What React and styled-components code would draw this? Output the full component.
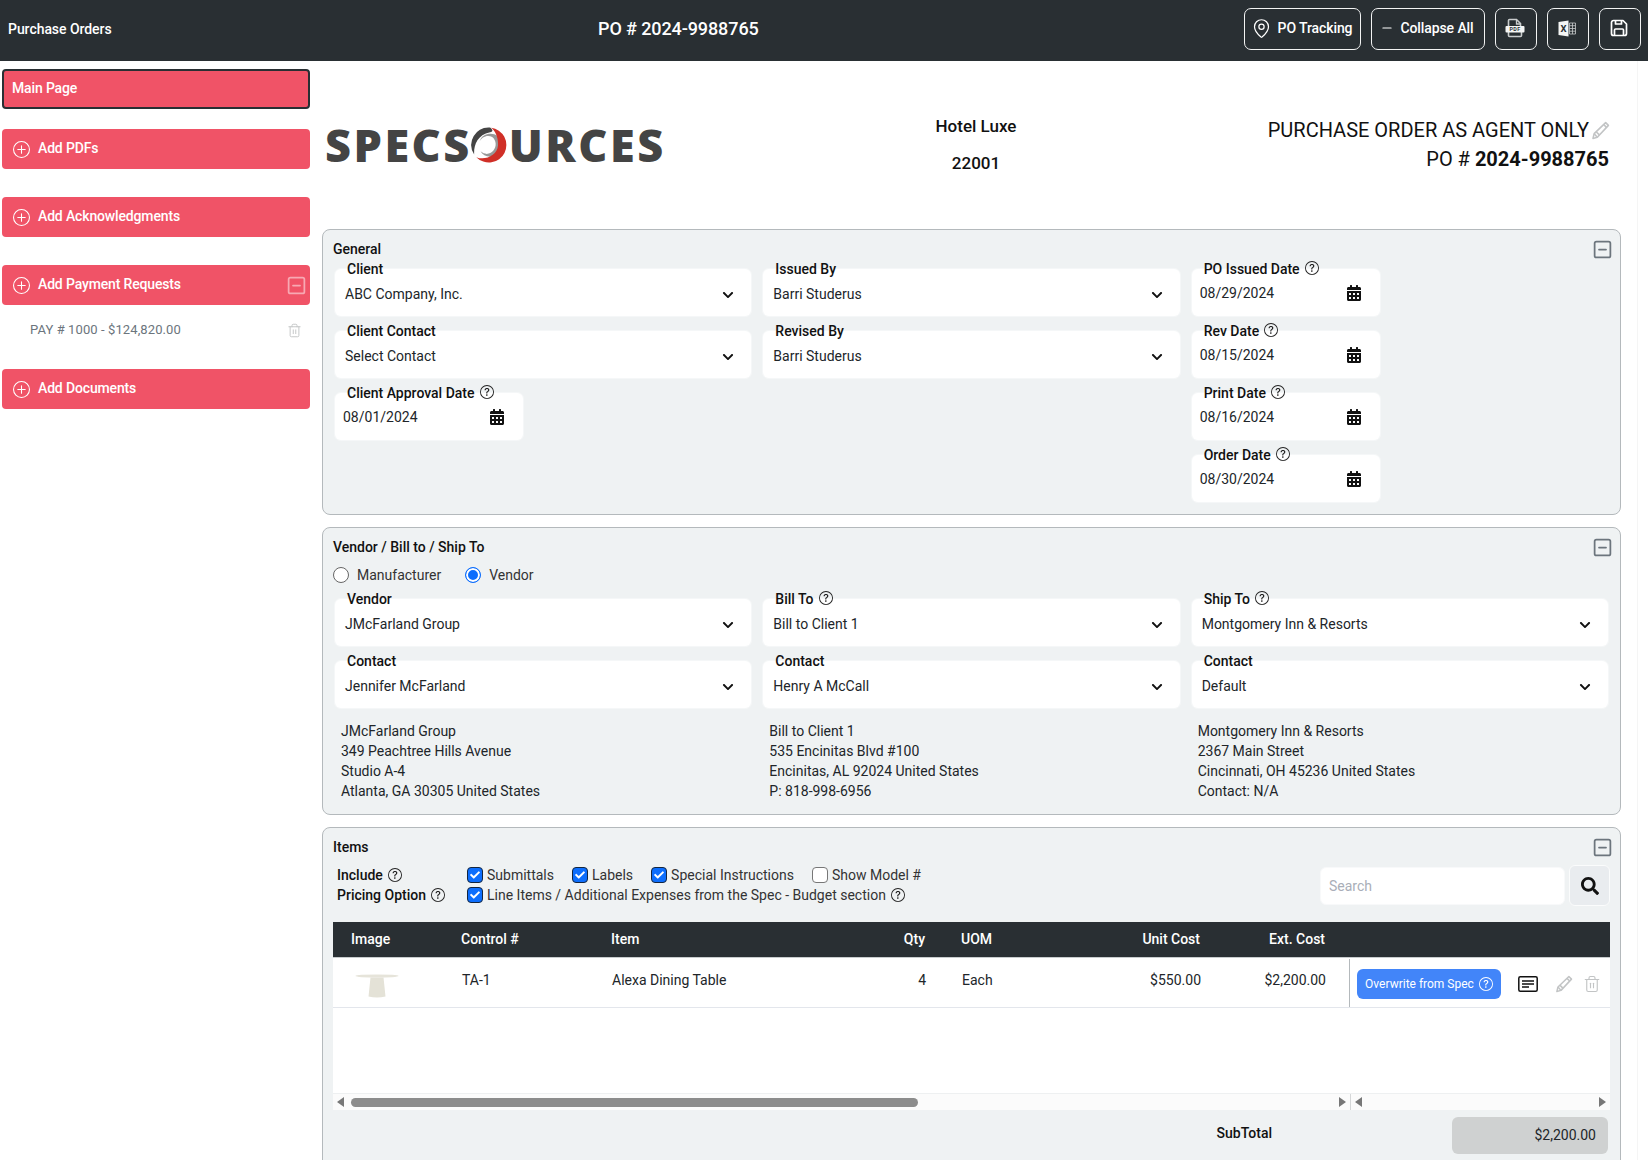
import React from "react";
import styled, { createGlobalStyle } from "styled-components";
import { MapPin, Minus, Trash2, SquareMinus } from "lucide-react";
import { BsPlusCircle, BsQuestionCircle } from "react-icons/bs";
import { FaCalendarAlt, FaChevronDown, FaSearch, FaCheck } from "react-icons/fa";

const GlobalStyle = createGlobalStyle`
  html, body {
    margin: 0;
    padding: 0;
    background: #fff;
  }
  * {
    box-sizing: border-box;
  }
  body {
    font-family: Roboto, "Liberation Sans", sans-serif;
    font-size: 14px;
    color: #212529;
  }
`;

const Page = styled.div`
  width: 1648px;
  height: 1160px;
  overflow: hidden;
  display: flex;
  flex-direction: column;
`;

const TopBar = styled.header`
  flex: none;
  height: 61px;
  background: #292f33;
  color: #fff;
  display: grid;
  grid-template-columns: 590px auto 1fr;
  align-items: center;
  padding: 0 7px 3px 8px;
`;

const TopLabel = styled.div`
  font-weight: 500;
  font-size: 14px;
  letter-spacing: -0.05px;
`;

const TopTitle = styled.div`
  font-size: 18px;
  font-weight: 500;
  letter-spacing: -0.1px;
  margin-top: -2px;
`;

const TopActions = styled.div`
  justify-self: end;
  display: flex;
  gap: 10px;
`;

const TopButton = styled.button`
  height: 42px;
  width: ${(p) => (p.$wide ? `${p.$wide}px` : "42px")};
  background: transparent;
  color: #fff;
  border: 1px solid #f2f3f3;
  border-radius: 7px;
  display: flex;
  align-items: center;
  justify-content: center;
  gap: 6px;
  font: 500 14px Roboto, sans-serif;
  letter-spacing: -0.1px;
  padding: 0 2px 2px 0;
`;

const Body = styled.div`
  flex: 1;
  display: flex;
  min-height: 0;
`;

const Sidebar = styled.aside`
  flex: none;
  width: 322px;
  padding: 8px 12px 0 2px;
`;

const SideList = styled.div`
  display: flex;
  flex-direction: column;
  gap: 28px;
`;

const SideButton = styled.div`
  height: 40px;
  background: #f05367;
  color: #fff;
  border-radius: 4px;
  display: flex;
  align-items: center;
  gap: 8px;
  padding: 0 6px 2px 11px;
  font-weight: 500;
  font-size: 14px;
  letter-spacing: -0.15px;

  svg {
    flex: none;
    margin-top: 2px;
  }
`;

const MainButton = styled(SideButton)`
  border: 2px solid #292f33;
  padding-left: 8px;
  margin-bottom: 20px;
`;

const SideLabel = styled.span`
  flex: 1;
`;

const PayRow = styled.div`
  height: 36px;
  padding: 15px 8px 0 28px;
  display: flex;
  justify-content: space-between;
  color: #6c757d;
  line-height: 20px;
  font-size: 13px;
  letter-spacing: 0.1px;

  svg {
    margin-top: 3px;
  }
`;

const Main = styled.main`
  flex: 1;
  min-width: 0;
  padding-right: 16px;
`;

const PageHead = styled.div`
  height: 168px;
  display: grid;
  grid-template-columns: 567px 168px 1fr;
  align-items: center;
  padding: 0 12px 0 3px;
`;

const Logo = styled.div`
  display: flex;
  align-items: center;
  color: #444;
  font-family: "Open Sans", sans-serif;
  font-weight: 800;
  font-size: 45px;
  letter-spacing: 2.5px;
  line-height: 46px;

  svg {
    margin: 0 2px 0 -1px;
  }
`;

const Hotel = styled.div`
  text-align: center;
  font-size: 17px;
  font-weight: 500;
  line-height: 37px;
  color: #111;
`;

const OrderInfo = styled.div`
  text-align: right;
  font-size: 20px;
  line-height: 29px;
  color: #111;

  b {
    font-weight: 700;
  }
`;

const AgentLine = styled.div`
  display: flex;
  justify-content: flex-end;
  align-items: center;
  gap: 2px;
  margin-right: -1px;
`;

const Panels = styled.div`
  display: flex;
  flex-direction: column;
  gap: 12px;
`;

const Panel = styled.section`
  background: #eff2f3;
  border: 1px solid #b4b9bc;
  border-radius: 8px;
  padding: 9px 10px ${(p) => p.$pb || 12}px;
`;

const PanelHead = styled.div`
  height: 20px;
  display: flex;
  justify-content: space-between;
  align-items: center;
  font-weight: 500;
  color: #111;
  line-height: 20px;
`;

const FieldGrid = styled.div`
  display: grid;
  grid-template-columns: repeat(3, 1fr);
  gap: 12px;
  padding: 0 2px;
  margin-top: ${(p) => p.$mt || 0}px;
`;

const FieldColumn = styled.div`
  display: flex;
  flex-direction: column;
  gap: 15px;
`;

const FieldBox = styled.div`
  position: relative;
  height: 47px;
  width: ${(p) => (p.$date ? "188px" : "auto")};
  background: #fff;
  border-radius: 6px;
  box-shadow: 0 0 0 1px #f5f7f8;
  display: flex;
  align-items: center;
  justify-content: space-between;
  padding: ${(p) => (p.$date ? "0 18px 0 8px" : "3px 17px 0 10px")};
  font-size: 14px;

  > svg:last-child {
    margin-top: ${(p) => (p.$date ? 0 : 2)}px;
  }
`;

const FieldLabel = styled.label`
  position: absolute;
  left: 8px;
  top: -10px;
  height: 20px;
  padding: 0 4px;
  display: inline-flex;
  align-items: center;
  gap: 5px;
  font-weight: 500;
  color: #111;
  background: linear-gradient(transparent 10px, #fff 10px);
  white-space: nowrap;

  svg {
    margin-top: -2px;
  }
`;

const RadioRow = styled.div`
  height: 20px;
  margin: 8px 0 14px;
  display: flex;
  align-items: center;
`;

const RadioLabel = styled.label`
  display: flex;
  align-items: center;
  gap: 8px;
  margin-right: 24px;
  color: #333;
`;

const Radio = styled.span`
  width: 16px;
  height: 16px;
  border-radius: 50%;
  background: ${(p) => (p.$on ? "#0d6efd" : "#fff")};
  border: 1px solid ${(p) => (p.$on ? "#0d6efd" : "#666")};
  box-shadow: ${(p) => (p.$on ? "inset 0 0 0 2px #fff" : "none")};
`;

const AddressGrid = styled(FieldGrid)`
  height: 79px;
`;

const Address = styled.div`
  padding-left: 6px;
  line-height: 20px;
  color: #212529;
`;

const Toolbar = styled.div`
  height: 41px;
  margin: 8px 0 16px;
  display: flex;
  justify-content: space-between;
  align-items: center;
`;

const OptionGrid = styled.div`
  display: grid;
  grid-template-columns: 130px 1fr;
  grid-auto-rows: 20px;
  padding-left: 4px;
  margin-bottom: 2px;
  align-items: center;
`;

const OptionName = styled.div`
  display: flex;
  align-items: center;
  gap: 5px;
  font-weight: 500;
  color: #111;
`;

const OptionList = styled.div`
  display: flex;
  align-items: center;
  gap: 18px;
`;

const Check = styled.label`
  display: flex;
  align-items: center;
  gap: 4px;
  color: #333;

  > svg {
    margin-left: 1px;
  }
`;

const CheckBox = styled.span`
  width: 16px;
  height: 16px;
  border-radius: 4px;
  display: inline-flex;
  align-items: center;
  justify-content: center;
  color: #fff;
  background: ${(p) => (p.$on ? "#0d6efd" : "#fff")};
  border: 1px solid ${(p) => (p.$on ? "#14263f" : "#777")};
`;

const SearchBar = styled.div`
  display: flex;
  align-items: center;
  gap: 4px;
`;

const SearchInput = styled.input`
  width: 245px;
  height: 38px;
  border: 1px solid #f8f9fa;
  border-radius: 6px;
  background: #fff;
  padding: 0 8px;
  font: 14px Roboto, sans-serif;
  outline: none;

  &::placeholder {
    color: #a9aeb8;
  }
`;

const SearchButton = styled.button`
  width: 41px;
  height: 41px;
  border: 1px solid #fbfcfc;
  border-radius: 6px;
  background: #e9ecef;
  color: #111;
  display: flex;
  align-items: center;
  justify-content: center;
  padding: 0;
`;

const columns = "110px 150px 251px 80px 119px 156px 142px 1fr";

const TableHead = styled.div`
  height: 36px;
  background: #292f33;
  border-bottom: 1px solid #c8ccce;
  color: #fff;
  font-weight: 500;
  display: grid;
  grid-template-columns: ${columns};
  align-items: center;
  padding-left: 10px;
  line-height: 35px;
`;

const TableRow = styled.div`
  height: 50px;
  background: #fff;
  border-bottom: 1px solid #e3e6ec;
  display: grid;
  grid-template-columns: ${columns};
  padding-left: 11px;
  line-height: 20px;
`;

const Cell = styled.div`
  padding: ${(p) => (p.$top ? "12px" : "0")} ${(p) => p.$pr ?? (p.$right ? 9 : 8)}px 0 ${(p) => p.$pl ?? 8}px;
  text-align: ${(p) => (p.$right ? "right" : "left")};
`;

const ActionCell = styled.div`
  margin: 1px 0 0 -3px;
  border-left: 1px solid #b4b9bc;
  display: flex;
  align-items: center;
  padding: 2px 0 0 7px;
`;

const OverwriteButton = styled.button`
  width: 144px;
  height: 30px;
  background: #4285f9;
  color: #fff;
  border: 0;
  border-radius: 6px;
  display: flex;
  align-items: center;
  justify-content: center;
  gap: 5px;
  font: 12px Roboto, sans-serif;
  padding: 0;
  margin-right: 17px;
`;

const RowIcon = styled.span`
  display: inline-flex;
  margin-right: ${(p) => p.$mr || 0}px;
  color: #c2c4c5;
`;

const TableFill = styled.div`
  height: 85px;
  background: #fff;
`;

const ScrollRow = styled.div`
  height: 17px;
  background: #fbfbfb;
  border-top: 1px solid #eef0f1;
  display: flex;
  align-items: center;
`;

const ScrollPart = styled.div`
  display: flex;
  align-items: center;
  height: 100%;
  width: ${(p) => p.$w}px;
  padding: 0 4px;
  justify-content: space-between;
`;

const ScrollSplit = styled(ScrollPart)`
  border-left: 1px solid #d5d7d8;
`;

const ScrollLeft = styled.div`
  display: flex;
  align-items: center;
  gap: 7px;
`;

const Thumb = styled.div`
  width: 567px;
  height: 9px;
  border-radius: 5px;
  background: #8c8c8c;
`;

const Arrow = styled.span`
  width: 0;
  height: 0;
  border-top: 5px solid transparent;
  border-bottom: 5px solid transparent;
  ${(p) => (p.$right ? "border-left: 7px solid #777;" : "border-right: 7px solid #777;")}
`;

const SubTotalRow = styled.div`
  margin-top: 7px;
  display: flex;
  justify-content: flex-end;
  align-items: center;
  gap: 180px;
  padding-right: 2px;
`;

const SubTotalLabel = styled.div`
  font-weight: 500;
  color: #111;
  margin-top: -6px;
`;

const SubTotalValue = styled.div`
  width: 156px;
  height: 37px;
  background: #cfd1d1;
  border-radius: 6px;
  text-align: right;
  line-height: 37px;
  padding-right: 12px;
`;

const ScrollTrack = styled.div`
  flex: none;
  width: 11px;
  border-left: 1px solid #f5f5f5;
`;

const CollapseGlyph = styled(SquareMinus)`
  margin-right: -3px;
`;

const ProductShot = styled.svg`
  display: block;
  margin: 3px 0 0 3px;
`;

const Help = ({ size = 14 }) => <BsQuestionCircle size={size} color="#222" />;

const Pencil = ({ size = 18, color = "#c2c4c5" }) => (
  <svg width={size} height={size} viewBox="0 0 24 24" fill="none" stroke={color} strokeWidth="2" strokeLinejoin="round">
    <path d="M18.500 2l3.500 3.500L8 20.500 2.500 22 4 16z" />
    <path d="M16 4.500l3.500 3.500M4 16l4 4.500M6.500 13.500l4 4" />
  </svg>
);

const NoteIcon = () => (
  <svg width="20" height="16" viewBox="0 0 20 16" fill="none" stroke="#111">
    <rect x="0.800" y="0.800" width="18.400" height="14.400" rx="1.500" strokeWidth="1.500" />
    <path d="M4 5h12M4 8h12M4 11h7" strokeWidth="1.400" />
  </svg>
);

const PdfIcon = () => (
  <svg width="20" height="20" viewBox="0 0 20 20">
    <path d="M3.500 9V2.500a1 1 0 0 1 1-1h7l4 4V9M3.500 14v3.500a1 1 0 0 0 1 1h11a1 1 0 0 0 1-1V14" fill="none" stroke="#c9cccd" strokeWidth="1.600" />
    <path d="M11.500 2v4h4" fill="none" stroke="#c9cccd" strokeWidth="1.300" />
    <rect x="0.500" y="8" width="19" height="6.500" rx="1" fill="#f4f5f5" />
    <text x="10" y="13.300" textAnchor="middle" fontSize="5.400" fontWeight="700" fontFamily="Roboto, sans-serif" fill="#292f33" letterSpacing="0.300">PDF</text>
  </svg>
);

const ExcelIcon = () => (
  <svg width="18" height="17" viewBox="0 0 18 17">
    <path d="M0.500 2L10.500 0.500V16.500L0.500 15z" fill="#f4f5f5" />
    <text x="5.500" y="11.800" textAnchor="middle" fontSize="9.500" fontWeight="700" fontFamily="Roboto, sans-serif" fill="#292f33">X</text>
    <path d="M11.500 3h6v11h-6zM11.500 5.700h6M11.500 8.500h6M11.500 11.200h6M14.500 3v11" fill="none" stroke="#c9cccd" strokeWidth="0.800" />
  </svg>
);

const SaveIcon = () => (
  <svg width="18" height="18" viewBox="0 0 18 18" fill="none" stroke="#fff" strokeWidth="1.700" strokeLinejoin="round">
    <path d="M3.500 1.500H13l3.500 3.500v9.500a2 2 0 0 1-2 2h-11a2 2 0 0 1-2-2v-11a2 2 0 0 1 2-2z" />
    <path d="M5.500 1.500v3.500h6V1.500M4.500 16.500v-5.500a1 1 0 0 1 1-1h7a1 1 0 0 1 1 1v5.500" />
  </svg>
);

const SwirlO = () => (
  <svg width="36" height="36" viewBox="0 0 34 34">
    <path d="M18 0.500A16.500 16.500 0 0 0 3 26C2.500 18 5.500 7.500 18 5c5-1 0-4.500 0-4.500z" fill="#444" />
    <path d="M8 14c2-5 8-7 12-4.500 4 3 4.500 9 1 13-3 3.500-8 4-12 .5 3 6 12 7 16.500 1.500 4-5 3.500-12-.5-16C20 4.500 10 6 8 14z" fill="#444" opacity="0.550" />
    <path d="M19 0.700A16.500 16.500 0 1 1 5 28.500C13 32 25 27 25.500 17.500 26 10 23 4 19 0.700z" fill="#d02f27" />
  </svg>
);

const TableImage = () => (
  <ProductShot width="44" height="26" viewBox="0 0 44 26">
    <ellipse cx="22" cy="3" rx="21.500" ry="1.600" fill="#e6e4da" />
    <path d="M15.500 4.500h13l2 19q-8.500 1.800-17 0z" fill="#e4e2d7" />
  </ProductShot>
);

const Field = ({ label, help, value, date }) => (
  <FieldBox $date={date}>
    <FieldLabel>
      {label}
      {help && <Help />}
    </FieldLabel>
    <span>{value}</span>
    {date ? <FaCalendarAlt size={16} color="#111" /> : <FaChevronDown size={12} color="#111" />}
  </FieldBox>
);

const CollapseIcon = ({ color = "#6c757d" }) => <CollapseGlyph size={21} color={color} strokeWidth={2} />;

const CheckOption = ({ on, children }) => (
  <Check>
    <CheckBox $on={on}>{on && <FaCheck size={10} />}</CheckBox>
    {children}
  </Check>
);

export default function App() {
  return (
    <>
      <GlobalStyle />
      <Page>
        <TopBar>
          <TopLabel>Purchase Orders</TopLabel>
          <TopTitle>PO # 2024-9988765</TopTitle>
          <TopActions>
            <TopButton $wide={117}>
              <MapPin size={21} strokeWidth={1.400} />
              PO Tracking
            </TopButton>
            <TopButton $wide={114}>
              <Minus size={14} />
              Collapse All
            </TopButton>
            <TopButton>
              <PdfIcon />
            </TopButton>
            <TopButton>
              <ExcelIcon />
            </TopButton>
            <TopButton>
              <SaveIcon />
            </TopButton>
          </TopActions>
        </TopBar>
        <Body>
          <Sidebar>
            <MainButton>Main Page</MainButton>
            <SideList>
              <SideButton>
                <BsPlusCircle size={17} />
                Add PDFs
              </SideButton>
              <SideButton>
                <BsPlusCircle size={17} />
                Add Acknowledgments
              </SideButton>
              <div>
                <SideButton>
                  <BsPlusCircle size={17} />
                  <SideLabel>Add Payment Requests</SideLabel>
                  <CollapseIcon color="#f7a9b3" />
                </SideButton>
                <PayRow>
                  PAY # 1000 - $124,820.00
                  <Trash2 size={15} color="#c2c4c5" strokeWidth={1.500} />
                </PayRow>
              </div>
              <SideButton>
                <BsPlusCircle size={17} />
                Add Documents
              </SideButton>
            </SideList>
          </Sidebar>
          <Main>
            <PageHead>
              <Logo>
                SPECS
                <SwirlO />
                URCES
              </Logo>
              <Hotel>
                <div>Hotel Luxe</div>
                <div>22001</div>
              </Hotel>
              <OrderInfo>
                <AgentLine>
                  PURCHASE ORDER AS AGENT ONLY
                  <Pencil size={19} />
                </AgentLine>
                <div>
                  PO # <b>2024-9988765</b>
                </div>
              </OrderInfo>
            </PageHead>
            <Panels>
              <Panel>
                <PanelHead>
                  General
                  <CollapseIcon />
                </PanelHead>
                <FieldGrid $mt={10}>
                  <FieldColumn>
                    <Field label="Client" value="ABC Company, Inc." />
                    <Field label="Client Contact" value="Select Contact" />
                    <Field label="Client Approval Date" help value="08/01/2024" date />
                  </FieldColumn>
                  <FieldColumn>
                    <Field label="Issued By" value="Barri Studerus" />
                    <Field label="Revised By" value="Barri Studerus" />
                  </FieldColumn>
                  <FieldColumn>
                    <Field label="PO Issued Date" help value="08/29/2024" date />
                    <Field label="Rev Date" help value="08/15/2024" date />
                    <Field label="Print Date" help value="08/16/2024" date />
                    <Field label="Order Date" help value="08/30/2024" date />
                  </FieldColumn>
                </FieldGrid>
              </Panel>
              <Panel $pb={14}>
                <PanelHead>
                  Vendor / Bill to / Ship To
                  <CollapseIcon />
                </PanelHead>
                <RadioRow>
                  <RadioLabel>
                    <Radio />
                    Manufacturer
                  </RadioLabel>
                  <RadioLabel>
                    <Radio $on />
                    Vendor
                  </RadioLabel>
                </RadioRow>
                <FieldGrid>
                  <FieldColumn>
                    <Field label="Vendor" value="JMcFarland Group" />
                    <Field label="Contact" value="Jennifer McFarland" />
                  </FieldColumn>
                  <FieldColumn>
                    <Field label="Bill To" help value="Bill to Client 1" />
                    <Field label="Contact" value="Henry A McCall" />
                  </FieldColumn>
                  <FieldColumn>
                    <Field label="Ship To" help value="Montgomery Inn & Resorts" />
                    <Field label="Contact" value="Default" />
                  </FieldColumn>
                </FieldGrid>
                <AddressGrid $mt={13}>
                  <Address>
                    <div>JMcFarland Group</div>
                    <div>349 Peachtree Hills Avenue</div>
                    <div>Studio A-4</div>
                    <div>Atlanta, GA 30305 United States</div>
                  </Address>
                  <Address>
                    <div>Bill to Client 1</div>
                    <div>535 Encinitas Blvd #100</div>
                    <div>Encinitas, AL 92024 United States</div>
                    <div>P: 818-998-6956</div>
                  </Address>
                  <Address>
                    <div>Montgomery Inn & Resorts</div>
                    <div>2367 Main Street</div>
                    <div>Cincinnati, OH 45236 United States</div>
                    <div>Contact: N/A</div>
                  </Address>
                </AddressGrid>
              </Panel>
              <Panel $pb={40}>
                <PanelHead>
                  Items
                  <CollapseIcon />
                </PanelHead>
                <Toolbar>
                  <OptionGrid>
                    <OptionName>
                      Include <Help />
                    </OptionName>
                    <OptionList>
                      <CheckOption on>Submittals</CheckOption>
                      <CheckOption on>Labels</CheckOption>
                      <CheckOption on>Special Instructions</CheckOption>
                      <CheckOption>Show Model #</CheckOption>
                    </OptionList>
                    <OptionName>
                      Pricing Option <Help />
                    </OptionName>
                    <OptionList>
                      <CheckOption on>
                        Line Items / Additional Expenses from the Spec - Budget section
                        <Help />
                      </CheckOption>
                    </OptionList>
                  </OptionGrid>
                  <SearchBar>
                    <SearchInput placeholder="Search" />
                    <SearchButton>
                      <FaSearch size={18} />
                    </SearchButton>
                  </SearchBar>
                </Toolbar>
                <TableHead>
                  <Cell>Image</Cell>
                  <Cell>Control #</Cell>
                  <Cell>Item</Cell>
                  <Cell $right>Qty</Cell>
                  <Cell $pl={27}>UOM</Cell>
                  <Cell $right>Unit Cost</Cell>
                  <Cell $right $pr={26}>Ext. Cost</Cell>
                </TableHead>
                <TableRow>
                  <Cell $top>
                    <TableImage />
                  </Cell>
                  <Cell $top>TA-1</Cell>
                  <Cell $top>Alexa Dining Table</Cell>
                  <Cell $top $right>4</Cell>
                  <Cell $top $pl={27}>Each</Cell>
                  <Cell $top $right>$550.00</Cell>
                  <Cell $top $right $pr={26}>$2,200.00</Cell>
                  <ActionCell>
                    <OverwriteButton>
                      Overwrite from Spec
                      <BsQuestionCircle size={14} />
                    </OverwriteButton>
                    <RowIcon $mr={17}>
                      <NoteIcon />
                    </RowIcon>
                    <RowIcon $mr={10}>
                      <Pencil />
                    </RowIcon>
                    <RowIcon>
                      <Trash2 size={18} strokeWidth={1.500} />
                    </RowIcon>
                  </ActionCell>
                </TableRow>
                <TableFill />
                <ScrollRow>
                  <ScrollPart $w={1017}>
                    <ScrollLeft>
                      <Arrow />
                      <Thumb />
                    </ScrollLeft>
                    <Arrow $right />
                  </ScrollPart>
                  <ScrollSplit $w={260}>
                    <Arrow />
                    <Arrow $right />
                  </ScrollSplit>
                </ScrollRow>
                <SubTotalRow>
                  <SubTotalLabel>SubTotal</SubTotalLabel>
                  <SubTotalValue>$2,200.00</SubTotalValue>
                </SubTotalRow>
              </Panel>
            </Panels>
          </Main>
          <ScrollTrack />
        </Body>
      </Page>
    </>
  );
}
